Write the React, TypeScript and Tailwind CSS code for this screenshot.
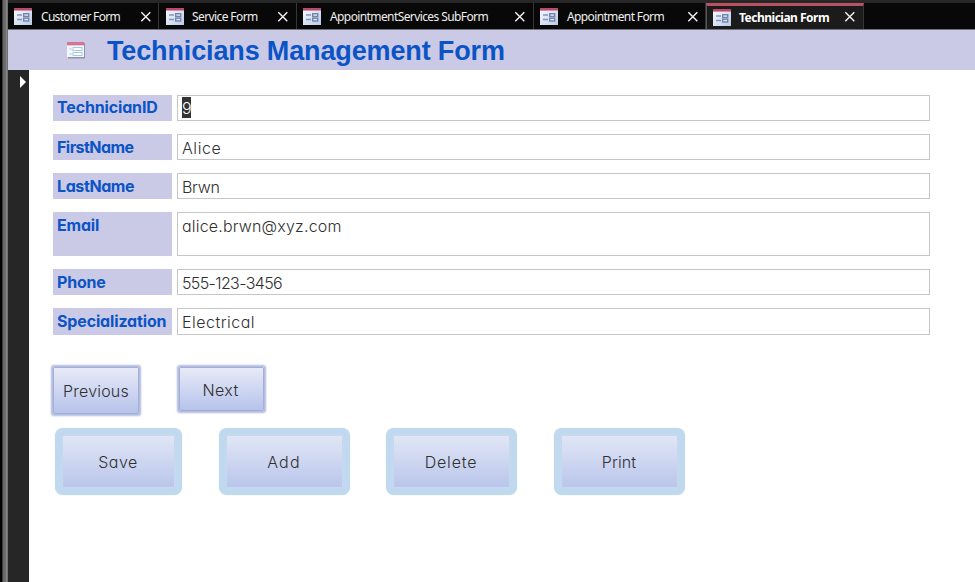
import React from "react";

const tabs = [
  { label: "Customer Form", tab: "w-[151px] pl-[6px]", text: "tracking-[-0.7px]", close: "left-[132px]" },
  { label: "Service Form", tab: "w-[138px] pl-[7px]", text: "-ml-px tracking-[-0.6px]", close: "left-[118px]" },
  { label: "AppointmentServices SubForm", tab: "w-[237px] pl-[6px]", text: "tracking-[-0.6px]", close: "left-[217px]" },
  { label: "Appointment Form", tab: "w-[172px] pl-[6px]", text: "tracking-[-0.63px]", close: "left-[153px]" },
  { label: "Technician Form", tab: "w-[158px] pl-[6px]", text: "-ml-px tracking-[-0.5px]", close: "left-[137px]", active: true },
];

const fields = [
  { label: "TechnicianID", value: "9", height: "h-[26px]", gap: "mb-[13px]", line: "leading-[25px]", ls: "tracking-[-0.15px]", vs: "", selected: true },
  { label: "FirstName", value: "Alice", height: "h-[26px]", gap: "mb-[13px]", line: "leading-[26px]", ls: "tracking-[-0.55px]", vs: "tracking-[0.6px]" },
  { label: "LastName", value: "Brwn", height: "h-[26px]", gap: "mb-[13px]", line: "leading-[27px]", ls: "tracking-[-0.4px]", vs: "tracking-[-0.3px]" },
  { label: "Email", value: "alice.brwn@xyz.com", height: "h-[44px]", gap: "mb-[13px]", line: "leading-[27px]", ls: "tracking-[-0.2px]", vs: "tracking-[0.18px]" },
  { label: "Phone", value: "555-123-3456", height: "h-[26px]", gap: "mb-[13px]", line: "leading-[26px]", ls: "tracking-[-0.2px]", vs: "tracking-[-0.62px]" },
  { label: "Specialization", value: "Electrical", height: "h-[27px]", gap: "", line: "leading-[27px]", ls: "tracking-[-0.15px]", vs: "tracking-[0.48px]" },
];

const actions = [
  { label: "Save", box: "ml-0 w-[127px]", text: "tracking-[0.5px]" },
  { label: "Add", box: "ml-[37px] w-[131px]", text: "tracking-[1.2px]" },
  { label: "Delete", box: "ml-[36px] w-[131px]", text: "tracking-[0.8px]" },
  { label: "Print", box: "ml-[37px] w-[131px]", text: "tracking-[0.1px]" },
];

function FormIcon() {
  return (
    <svg width="18" height="17" viewBox="0 0 18 17" className="shrink-0">
      <defs>
        <linearGradient id="iconBody" x1="0" y1="0" x2="1" y2="1">
          <stop offset="0" stopColor="#fafcff" />
          <stop offset="1" stopColor="#b9cbe8" />
        </linearGradient>
      </defs>
      <rect width="18" height="17" fill="url(#iconBody)" />
      <rect width="18" height="2" fill="#b84a6b" />
      <rect y="2" width="18" height="1" fill="#d98aa4" />
      <path d="M3 7h5M3 11.5h5" stroke="#8795b8" strokeWidth="1.3" />
      <rect x="9.7" y="5.7" width="5" height="2.8" fill="#dce6f5" stroke="#7484aa" strokeWidth="1.4" />
      <rect x="9.7" y="10.2" width="5" height="2.8" fill="#dce6f5" stroke="#7484aa" strokeWidth="1.4" />
    </svg>
  );
}

function HeaderIcon() {
  return (
    <svg width="18" height="17" viewBox="0 0 18 17" className="shrink-0">
      <rect x="1" y="1" width="17" height="15.5" fill="#8e93a8" />
      <rect width="17" height="15" fill="#f5f8fa" />
      <rect width="17" height="3" fill="#d27693" />
      <rect y="3" width="17" height="1" fill="#e9c9d6" />
      <path d="M2.5 7h2M2.5 12h2" stroke="#9eb9cf" />
      <rect x="6" y="5.5" width="9" height="3" fill="#fff" stroke="#a5cbe2" />
      <rect x="6" y="10.5" width="9" height="3" fill="#fff" stroke="#a5cbe2" />
    </svg>
  );
}

export default function App() {
  return (
    <div className="flex h-[582px] w-[975px] overflow-hidden bg-white">
      <div className="flex w-2 shrink-0 bg-[#6c6c6c]">
        <div className="w-[2px] bg-black" />
        <div className="w-px bg-[#3c3c3c]" />
        <div className="w-[2px] bg-[#676767]" />
        <div className="w-px bg-[#707070]" />
        <div className="w-px bg-[#858585]" />
        <div className="w-px bg-[#707070]" />
      </div>
      <div className="flex flex-1 flex-col">
        <div className="h-[3px] bg-[#272727]" />
        <nav className="flex h-[27px] border-b border-[#707078] bg-[#080808] font-['Noto_Sans',sans-serif] text-[12px] text-[#eeeeee]">
          {tabs.map((t) => (
            <div
              key={t.label}
              className={`relative flex h-[26px] shrink-0 items-center border-r border-[#363636] ${t.tab} ${
                t.active ? "border-l border-t-[3px] border-l-[#55555a] border-t-[#b75262] bg-[#1b1b1b] pb-[1px] font-bold text-white" : "pt-[1px]"
              }`}
            >
              <FormIcon />
              <span className="ml-[9px] mt-px whitespace-nowrap">
                <span className={t.text}>{t.label}</span>
              </span>
              <svg width="12" height="12" viewBox="0 0 12 12" className={`absolute ${t.active ? "top-[5px]" : "top-[8px]"} ${t.close}`}>
                <path d="M1.3 1.3l9 9M10.3 1.3l-9 9" stroke="#f4f4f4" strokeWidth="1.4" />
              </svg>
            </div>
          ))}
        </nav>
        <header className="flex h-10 items-center bg-[#cacae7] pl-[59px]">
          <HeaderIcon />
          <h1 className="ml-[22px] mt-[2px] whitespace-nowrap font-['Liberation_Sans',Arial,sans-serif] text-[27px] font-bold leading-10 tracking-[-0.14px] text-[#0b54c5]">
            Technicians Management Form
          </h1>
        </header>
        <div className="flex flex-1">
          <div className="w-[21px] shrink-0 bg-[#262626]">
            <svg width="7" height="12" viewBox="0 0 7 12" className="ml-[12px] mt-[6px]">
              <path d="M0 0L6 6L0 12Z" fill="white" />
            </svg>
          </div>
          <main className="flex-1 pl-6 pt-[25px] font-['Inter',sans-serif] [font-feature-settings:'cv11']">
            {fields.map((f) => (
              <div key={f.label} className={`flex ${f.height} ${f.gap}`}>
                <label className={`w-[119px] whitespace-nowrap bg-[#cacae7] pl-1 text-[16px] font-bold text-[#0b54c5] ${f.line}`}>
                  <span className={f.ls}>{f.label}</span>
                </label>
                <div className={`ml-[5px] w-[753px] border border-[#c6c6c6] bg-white pl-1 text-[16px] font-light text-[#303030] ${f.line}`}>
                  <span className={f.selected ? "inline-block h-[21px] bg-[#333333] leading-[22px] tracking-[-0.6px] text-white" : f.vs}>{f.value}</span>
                </div>
              </div>
            ))}
            <div className="mt-[29px] flex items-start text-[16px] font-light text-[#303030]">
              <button className="mt-[3px] flex h-[47px] w-[86px] items-center justify-center rounded-[1px] border border-[#a3afda] bg-linear-to-b from-[#e7eaf7] to-[#b7c3eb] tracking-[0.2px] shadow-[0_0_2px_2px_#b2badd]">
                Previous
              </button>
              <button className="ml-[40px] mt-[3px] flex h-[44px] w-[85px] items-center justify-center rounded-[1px] border border-[#a3afda] bg-linear-to-b from-[#e7eaf7] to-[#b7c3eb] pr-[2px] pt-px tracking-[0.4px] shadow-[0_0_2px_2px_#b2badd]">
                Next
              </button>
            </div>
            <div className="ml-[2px] mt-[14px] flex text-[16px] font-light text-[#303030]">
              {actions.map((a) => (
                <button key={a.label} className={`flex h-[67px] rounded-lg bg-[#c0d9ef] p-[8px] shadow-[0_0_1px_#c0d9ef] ${a.box}`}>
                  <span className={`flex h-full w-full items-center justify-center bg-linear-to-b from-[#e1e6f6] to-[#bac6eb] pr-px pt-px shadow-[0_0_2px_1px_#c6d8ef] ${a.text}`}>
                    {a.label}
                  </span>
                </button>
              ))}
            </div>
          </main>
        </div>
      </div>
    </div>
  );
}
